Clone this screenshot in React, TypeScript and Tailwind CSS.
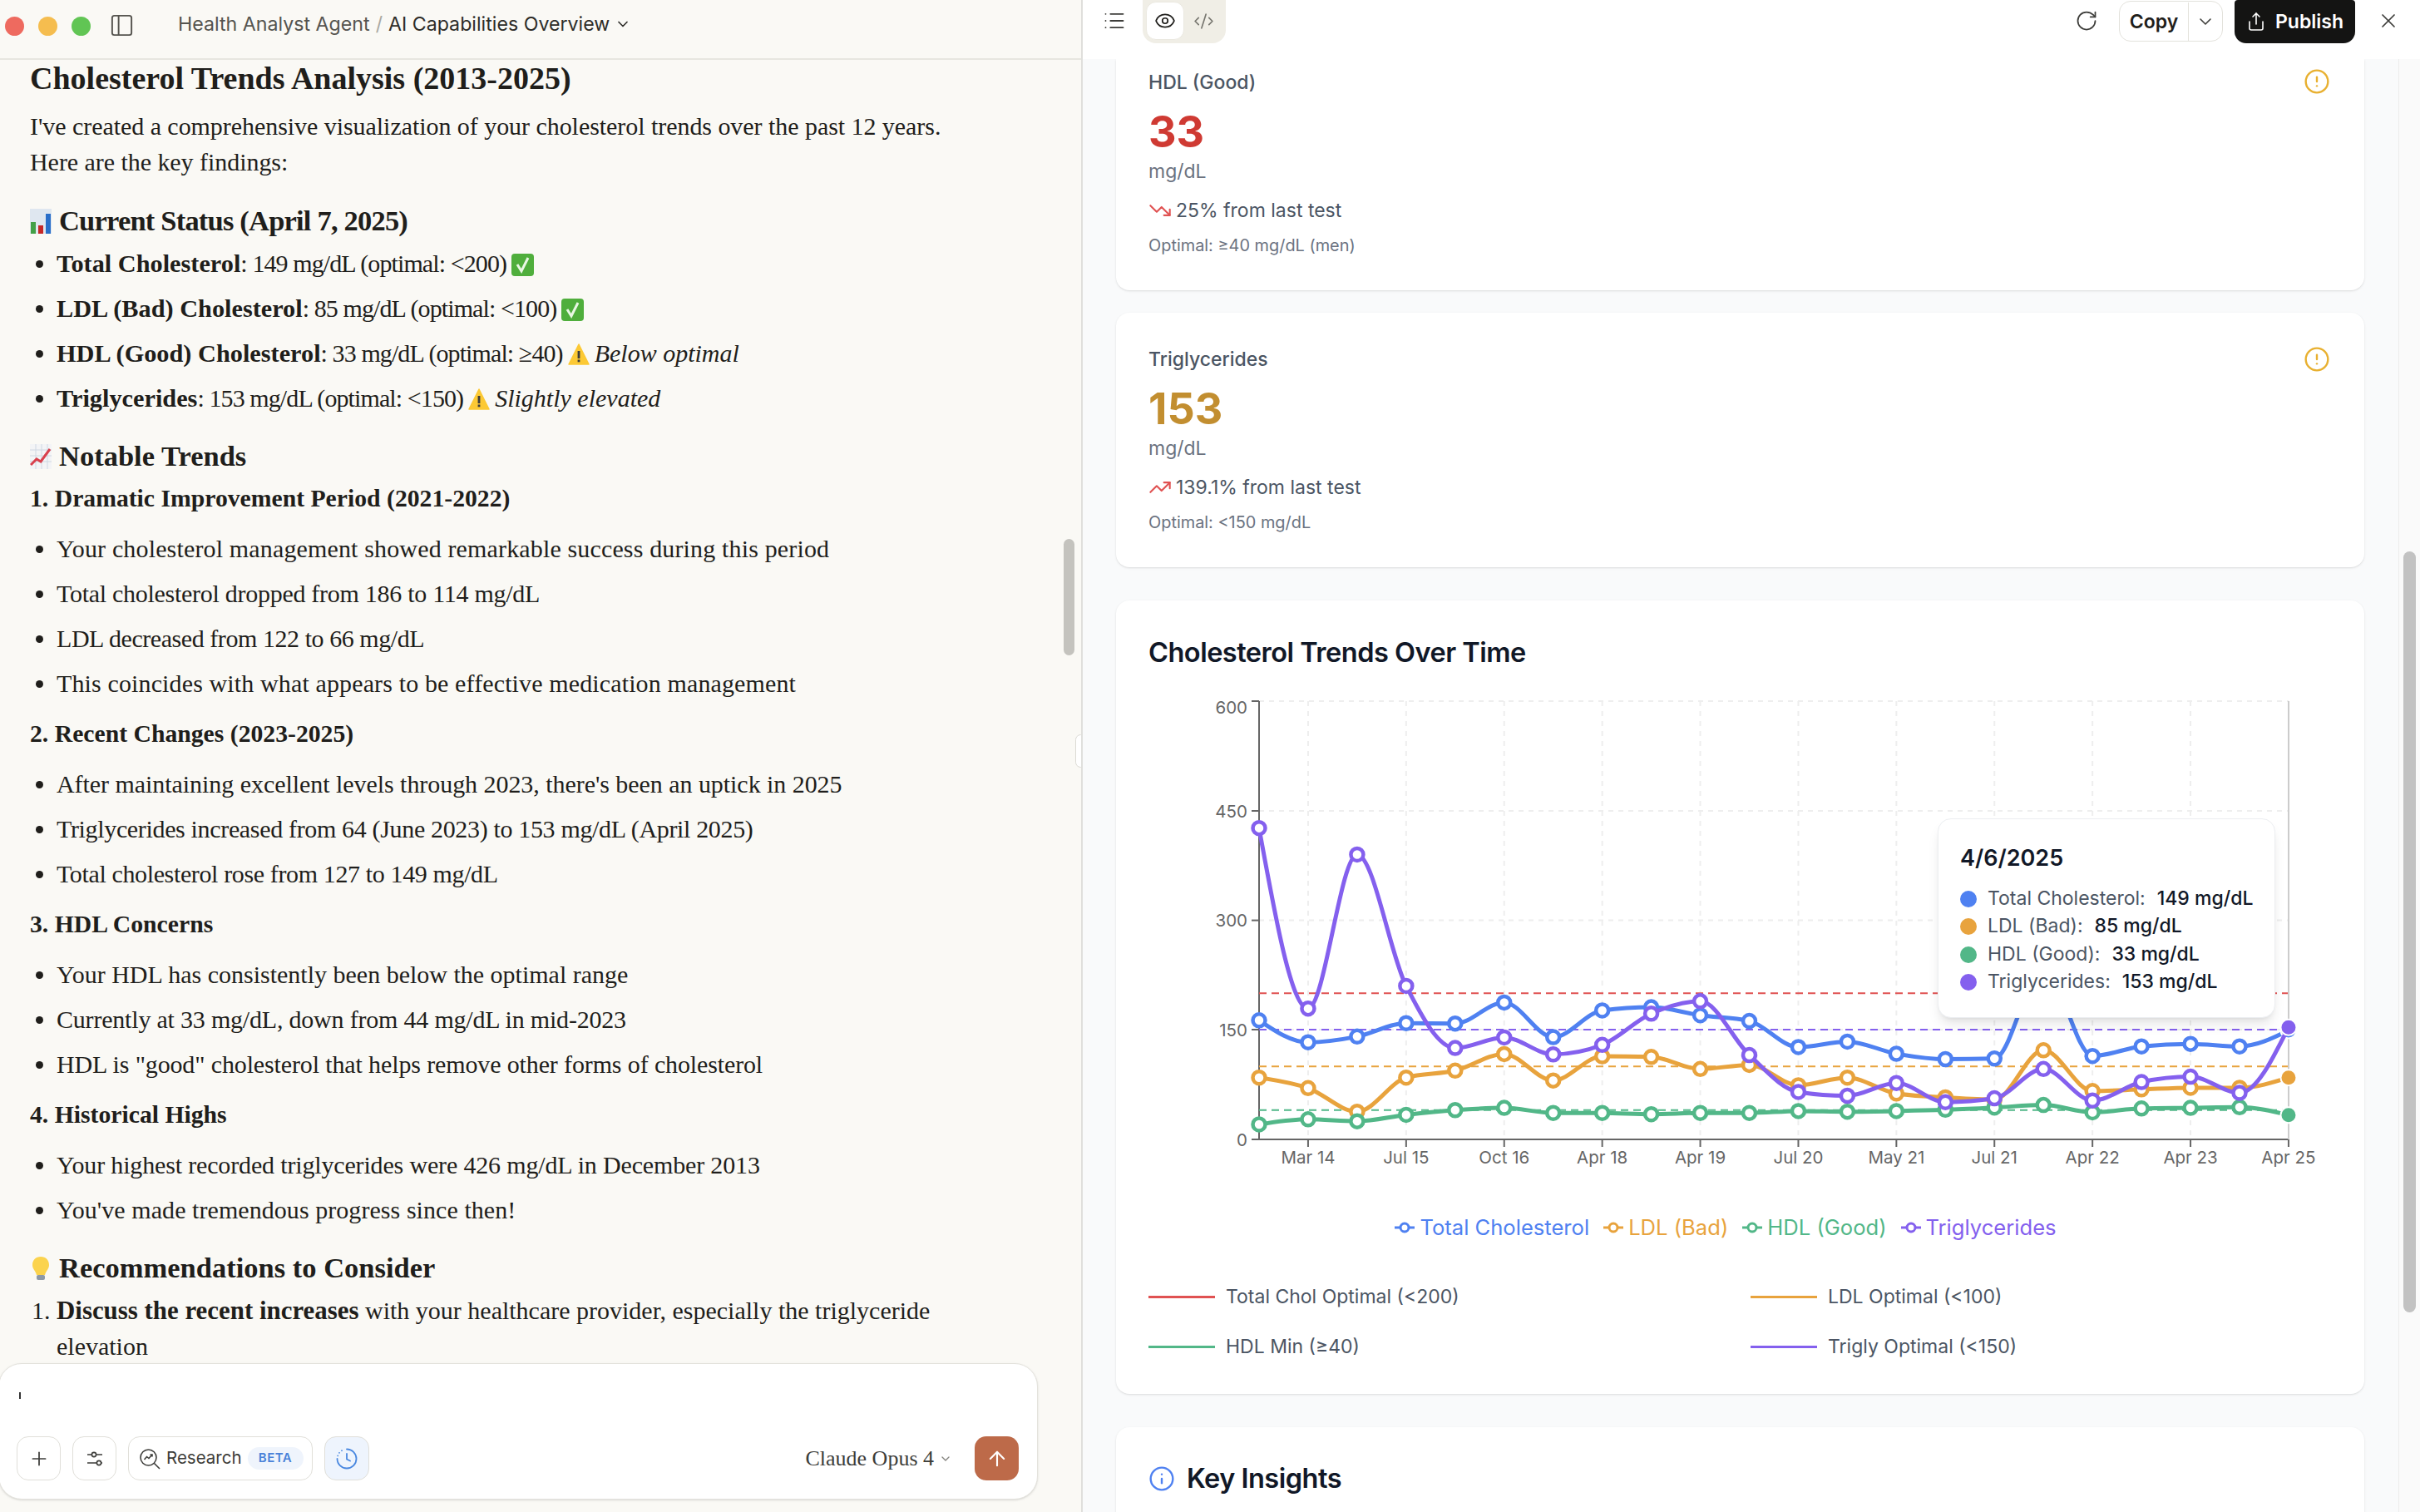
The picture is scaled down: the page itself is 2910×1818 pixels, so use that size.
import React from 'react';
import {
  List, Eye, CodeXml, RotateCw, ChevronDown, Share, X, Plus, ArrowUp,
  PanelLeft, TrendingDown, TrendingUp, Info, CircleAlert,
} from 'lucide-react';

const COLORS = { total: '#4f81f1', ldl: '#e8a33d', hdl: '#52b788', tri: '#8460ee' };

// y of each point, read off the plot (zoomed units, see sy)
const SERIES = [
  { key: 'total', color: COLORS.total, ys: [1063, 1132, 1114, 1072, 1073, 1007, 1116, 1032, 1022, 1047, 1065, 1147, 1130, 1168, 1185, 1183, 900, 1175, 1145, 1137, 1145, 1095] },
  { key: 'ldl', color: COLORS.ldl, ys: [1243, 1276, 1350, 1243, 1221, 1169, 1252, 1176, 1178, 1216, 1203, 1267, 1243, 1293, 1305, 1312, 1157, 1285, 1280, 1275, 1275, 1243] },
  { key: 'hdl', color: COLORS.hdl, ys: [1390, 1374, 1380, 1360, 1345, 1338, 1354, 1354, 1358, 1354, 1354, 1348, 1350, 1348, 1344, 1337, 1329, 1352, 1340, 1338, 1336, 1361] },
  { key: 'tri', color: COLORS.tri, ys: [459, 1026, 542, 955, 1150, 1117, 1170, 1140, 1042, 1003, 1172, 1288, 1300, 1260, 1320, 1308, 1216, 1315, 1257, 1240, 1291, 1085] },
];

const X_TICKS = ['Mar 14', 'Jul 15', 'Oct 16', 'Apr 18', 'Apr 19', 'Jul 20', 'May 21', 'Jul 21', 'Apr 22', 'Apr 23', 'Apr 25'];
const Y_TICKS = [
  { label: '600', y: 23, dy: 15 },
  { label: '450', y: 155, dy: 7.5 },
  { label: '300', y: 286.6, dy: 7.5 },
  { label: '150', y: 418, dy: 7.5 },
  { label: '0', y: 550, dy: 7.5 },
];

const sx = (i: number) => 114 + i * 58.95;
const sy = (z: number) => z / 2.613;

// same curve as d3's monotoneX
function monotonePath(pts: [number, number][]) {
  const n = pts.length;
  const d: number[] = [];
  for (let i = 0; i < n - 1; i++) d.push((pts[i + 1][1] - pts[i][1]) / (pts[i + 1][0] - pts[i][0]));
  const m: number[] = new Array(n).fill(0);
  for (let i = 1; i < n - 1; i++) {
    if (d[i - 1] * d[i] <= 0) m[i] = 0;
    else m[i] = (Math.sign(d[i - 1]) + Math.sign(d[i])) * Math.min(Math.abs(d[i - 1]), Math.abs(d[i]), 0.25 * Math.abs(d[i - 1] + d[i]));
  }
  m[0] = (3 * d[0] - m[1]) / 2;
  m[n - 1] = (3 * d[n - 2] - m[n - 2]) / 2;
  let p = `M${pts[0][0]},${pts[0][1]}`;
  for (let i = 0; i < n - 1; i++) {
    const h = (pts[i + 1][0] - pts[i][0]) / 3;
    p += `C${pts[i][0] + h},${pts[i][1] + m[i] * h} ${pts[i + 1][0] - h},${pts[i + 1][1] - m[i + 1] * h} ${pts[i + 1][0]},${pts[i + 1][1]}`;
  }
  return p;
}

const BarChartEmoji = () => (
  <svg width="26" height="30" viewBox="0 0 26 30" className="inline-block mr-[9px] align-[-4px]">
    <rect width="26" height="30" fill="#dfe7f0" />
    <rect x="1" y="16" width="6" height="14" fill="#43a047" />
    <rect x="10" y="20" width="6" height="10" fill="#c62828" />
    <rect x="19" y="6" width="6" height="24" fill="#2a6fc9" />
  </svg>
);

const TrendEmoji = () => (
  <svg width="26" height="30" viewBox="0 0 26 30" className="inline-block mr-[9px] align-[-4px]">
    <rect width="26" height="30" fill="#f3f4f6" />
    <path d="M0 7h26M0 14h26M0 21h26M7 0v30M14 0v30M21 0v30" stroke="#cfd8e3" strokeWidth="1" />
    <path d="M1 25l7-7 5 3 11-15" fill="none" stroke="#d9414e" strokeWidth="3" />
  </svg>
);

const BulbEmoji = () => (
  <svg width="26" height="30" viewBox="0 0 26 30" className="inline-block mr-[9px] align-[-4px]">
    <path d="M13 1c6 0 10 4 10 10 0 5-4 7-5 12H8C7 18 3 16 3 11 3 5 7 1 13 1z" fill="#fbd34d" />
    <rect x="8" y="23" width="10" height="6" rx="2" fill="#8d99a6" />
  </svg>
);

const Check = () => (
  <svg width="27" height="27" viewBox="0 0 27 27" className="inline-block ml-[6px] align-[-5px]">
    <rect width="27" height="27" rx="4" fill="#4fae3c" />
    <path d="M7 13l5 8 8-16" fill="none" stroke="#e9f7e4" strokeWidth="3" />
  </svg>
);

const Warn = () => (
  <svg width="26" height="26" viewBox="0 0 26 26" className="inline-block mx-[6px] align-[-4px]">
    <path d="M13 1l12 24H1z" fill="#fcc934" stroke="#fcc934" strokeWidth="1.5" strokeLinejoin="round" />
    <rect x="11.6" y="9" width="2.8" height="9" fill="#3b3b3b" />
    <rect x="11.6" y="19.5" width="2.8" height="2.8" fill="#3b3b3b" />
  </svg>
);

const SubHead: React.FC<{ className?: string; children: React.ReactNode }> = ({ className, children }) => (
  <h4 className={`font-bold text-[29.7px] leading-[43px] ${className ?? ''}`}>{children}</h4>
);

const Bullets: React.FC<{ className?: string; items: React.ReactNode[] }> = ({ className, items }) => (
  <ul className={`list-disc pl-[68px] ${className ?? ''}`}>
    {items.map((it, i) => (
      <li key={i} className="h-[54px] leading-[43px]">{it}</li>
    ))}
  </ul>
);

const Status: React.FC<{ name: string; rest: string; children?: React.ReactNode }> = ({ name, rest, children }) => (
  <>
    <b className="text-[30.3px]">{name}</b>
    <span className="tracking-[-0.9px]">{rest}</span>
    {children}
  </>
);

const Transcript = () => (
  <div className="flex-1 overflow-hidden pl-[36px] pr-[20px] font-['Liberation_Serif',serif] text-[30px] text-[#1f1e1b] whitespace-nowrap">
    <h2 className="font-bold text-[38px] leading-[46px] -mt-[1px]">Cholesterol Trends Analysis (2013-2025)</h2>
    <p className="leading-[43px] mt-[13px] tracking-[-0.05px]">
      I've created a comprehensive visualization of your cholesterol trends over the past 12 years.
      <br />
      Here are the key findings:
    </p>
    <h3 className="font-bold text-[34.5px] leading-[44px] mt-[27px] tracking-[-0.8px]"><BarChartEmoji />Current Status (April 7, 2025)</h3>
    <Bullets
      className="mt-[8px] -ml-[36px]"
      items={[
        <Status name="Total Cholesterol" rest=": 149 mg/dL (optimal: <200)"><Check /></Status>,
        <Status name="LDL (Bad) Cholesterol" rest=": 85 mg/dL (optimal: <100)"><Check /></Status>,
        <Status name="HDL (Good) Cholesterol" rest=": 33 mg/dL (optimal: ≥40)"><Warn /><i>Below optimal</i></Status>,
        <Status name="Triglycerides" rest=": 153 mg/dL (optimal: <150)"><Warn /><i>Slightly elevated</i></Status>,
      ]}
    />
    <h3 className="font-bold text-[34.5px] leading-[44px] mt-[15px]"><TrendEmoji />Notable Trends</h3>
    <SubHead className="mt-[8px]">1. Dramatic Improvement Period (2021-2022)</SubHead>
    <Bullets
      className="mt-[17px] -ml-[36px]"
      items={[
        <span className="tracking-[0.15px]">Your cholesterol management showed remarkable success during this period</span>,
        <span className="tracking-[-0.28px]">Total cholesterol dropped from 186 to 114 mg/dL</span>,
        <span className="tracking-[-0.44px]">LDL decreased from 122 to 66 mg/dL</span>,
        <span className="tracking-[0.13px]">This coincides with what appears to be effective medication management</span>,
      ]}
    />
    <SubHead className="mt-[7px]">2. Recent Changes (2023-2025)</SubHead>
    <Bullets
      className="mt-[17px] -ml-[36px]"
      items={[
        <span className="tracking-[-0.05px]">After maintaining excellent levels through 2023, there's been an uptick in 2025</span>,
        <span className="tracking-[-0.34px]">Triglycerides increased from 64 (June 2023) to 153 mg/dL (April 2025)</span>,
        <span className="tracking-[-0.37px]">Total cholesterol rose from 127 to 149 mg/dL</span>,
      ]}
    />
    <SubHead className="mt-[7px]">3. HDL Concerns</SubHead>
    <Bullets
      className="mt-[17px] -ml-[36px]"
      items={[
        'Your HDL has consistently been below the optimal range',
        <span className="tracking-[-0.2px]">Currently at 33 mg/dL, down from 44 mg/dL in mid-2023</span>,
        <span className="tracking-[-0.13px]">HDL is "good" cholesterol that helps remove other forms of cholesterol</span>,
      ]}
    />
    <SubHead className="mt-[7px]">4. Historical Highs</SubHead>
    <Bullets
      className="mt-[17px] -ml-[36px]"
      items={[
        <span className="tracking-[-0.16px]">Your highest recorded triglycerides were 426 mg/dL in December 2013</span>,
        <span className="tracking-[0.06px]">You've made tremendous progress since then!</span>,
      ]}
    />
    <h3 className="font-bold text-[34.5px] leading-[44px] mt-[15px]"><BulbEmoji />Recommendations to Consider</h3>
    <ol className="list-decimal pl-[32px] mt-[8px]">
      <li className="leading-[43px]">
        <b className="text-[30.9px]">Discuss the recent increases</b> with your healthcare provider, especially the triglyceride
        <br />
        elevation
      </li>
    </ol>
  </div>
);

const ToolButton: React.FC<{ className?: string; children: React.ReactNode }> = ({ className, children }) => (
  <button className={`h-[53px] rounded-[14px] border-[1.5px] border-[#e0dfd9] flex items-center justify-center text-[#3d3d3a] ${className ?? ''}`}>
    {children}
  </button>
);

const Composer = () => (
  <div className="shrink-0 relative -ml-[2px] mb-[15px] mt-[-1px] w-[1250px] h-[164px] bg-white rounded-[28px] border-[1.5px] border-[#e3e2dc] shadow-sm flex items-end justify-between pl-[21px] pr-[22px] pb-[22px]">
    <div className="absolute left-[24px] top-[34px] w-[1.5px] h-[8px] bg-[#333]" />
    <div className="flex items-center gap-[14px]">
      <ToolButton className="w-[53px]"><Plus size={26} strokeWidth={1.6} /></ToolButton>
      <ToolButton className="w-[53px]">
        <svg width="24" height="24" viewBox="0 0 24 24" fill="none" stroke="#3d3d3a" strokeWidth="1.6">
          <path d="M3 7h5M14 7h7M3 17h11M20 17h1" />
          <circle cx="11" cy="7" r="2.6" />
          <circle cx="17" cy="17" r="2.6" />
        </svg>
      </ToolButton>
      <ToolButton className="w-[222px] pl-[12px] justify-start gap-[7px]">
        <svg width="26" height="26" viewBox="0 0 26 26" fill="none" stroke="#3d3d3a" strokeWidth="1.6">
          <circle cx="11.5" cy="11.5" r="9.5" />
          <path d="M18.5 18.5l6.5 6.5M6.5 14l3-3.5 2.5 2 4-4.5M13.5 8h2.5v2.5" />
        </svg>
        <span className="text-[20.5px] text-[#3d3d3a]">Research</span>
        <span className="h-[27px] w-[67px] justify-center rounded-full bg-[#eff4fc] text-[#4a82d9] text-[15px] font-semibold flex items-center tracking-[0.5px]">BETA</span>
      </ToolButton>
      <ToolButton className="w-[54px] bg-[#eef4fd] border-[#cfe0f7]">
        <svg width="26" height="26" viewBox="0 0 26 26" fill="none" stroke="#4a88e0" strokeWidth="1.8" strokeLinecap="round">
          <path d="M13 1.5A11.5 11.5 0 1 1 1.5 13" />
          <path d="M2.2 9.3v0M4 5.8v0M7 3.2v0" />
          <path d="M13 7v6.5l4 2" />
        </svg>
      </ToolButton>
    </div>
    <div className="flex items-center">
      <span className="font-['Liberation_Serif',serif] text-[26px] text-[#3d3d3a]">Claude Opus 4</span>
      <ChevronDown size={16} className="ml-[6px] text-[#85847f]" />
      <button className="ml-[27px] w-[53px] h-[53px] rounded-[14px] bg-[#bd6a49] flex items-center justify-center text-white">
        <ArrowUp size={28} strokeWidth={1.8} />
      </button>
    </div>
  </div>
);

const ChatPane = () => (
  <div className="relative w-[1300px] shrink-0 h-full flex flex-col bg-[#faf9f5]">
    <div className="h-[72px] shrink-0 border-b-2 border-[#e7e6e0] flex items-start pt-[15px] pl-[6px]">
      <span className="w-[23px] h-[23px] rounded-full bg-[#ee6a5f] mt-[5px]" />
      <span className="w-[23px] h-[23px] rounded-full bg-[#f5bd4f] ml-[17px] mt-[5px]" />
      <span className="w-[23px] h-[23px] rounded-full bg-[#61c554] ml-[17px] mt-[5px]" />
      <PanelLeft size={31} strokeWidth={1.5} className="ml-[22px] text-[#55544f]" />
      <div className="ml-[52px] -mt-[3px] flex items-center text-[23.2px] text-[#55544f] whitespace-nowrap">
        Health Analyst Agent<span className="text-[#aaa9a2] mx-[7px]">/</span>
        <span className="text-[#2e2d29]">AI Capabilities Overview</span>
        <ChevronDown size={20} className="ml-[6px] text-[#2e2d29]" />
      </div>
    </div>
    <Transcript />
    <Composer />
    <div className="absolute left-[1279px] top-[648px] w-[13px] h-[140px] rounded-full bg-[#c4c3be]" />
    <div className="absolute left-[1293px] top-[883px] w-[13px] h-[40px] rounded-full bg-white border-[1.5px] border-[#dcdbd5]" />
  </div>
);

const TopBar = () => (
  <div className="h-[71px] shrink-0 bg-white flex items-start justify-between pl-[24px] pr-[24px]">
    <div className="flex items-start">
      <List size={28} strokeWidth={1.6} className="text-[#3d3d3a] mt-[11px]" />
      <div className="ml-[20px] w-[100px] h-[52px] bg-[#f0eee6] rounded-b-[16px] flex items-start pl-[4px] pt-[2px]">
        <span className="w-[46px] h-[46px] bg-white rounded-[12px] flex items-center justify-center border border-[#ebe9e1]">
          <Eye size={26} strokeWidth={1.6} className="text-[#1f1e1b]" />
        </span>
        <span className="w-[46px] h-[46px] flex items-center justify-center">
          <CodeXml size={25} strokeWidth={1.6} className="text-[#77766f]" />
        </span>
      </div>
    </div>
    <div className="flex items-start">
      <RotateCw size={28} strokeWidth={1.5} className="mt-[11px] text-[#3d3d3a]" />
      <div className="ml-[25px] mt-[1px] w-[125px] h-[49px] rounded-[14px] border-[1.5px] border-[#e3e2dc] flex items-center">
        <span className="w-[83px] text-center font-semibold text-[23px] text-[#1f1e1b] border-r-[1.5px] border-[#e3e2dc] leading-[46px]">Copy</span>
        <ChevronDown size={24} strokeWidth={1.6} className="ml-[8px] text-[#3d3d3a]" />
      </div>
      <button className="ml-[14px] w-[145px] h-[52px] rounded-b-[14px] rounded-t-[4px] bg-[#141413] text-white flex items-center justify-center gap-[11px] font-semibold text-[23px]">
        <Share size={24} strokeWidth={1.6} />Publish
      </button>
      <X size={28} strokeWidth={1.5} className="ml-[26px] mt-[11px] text-[#3d3d3a]" />
    </div>
  </div>
);

const Stat: React.FC<{
  name: string; value: string; valueClass: string; change: string; up: boolean; optimal: string; className: string; iconTop: string;
}> = ({ name, value, valueClass, change, up, optimal, className, iconTop }) => (
  <div className={`relative bg-white rounded-[16px] shadow-sm px-[39px] shrink-0 ${className}`}>
    <CircleAlert size={32} strokeWidth={1.8} className={`absolute right-[41px] text-[#e8b030] ${iconTop}`} />
    <div className="text-[23px] leading-[32px] font-medium text-[#4b5563]">{name}</div>
    <div className={`text-[52px] leading-[60px] font-bold mt-[14px] ${valueClass}`}>{value}</div>
    <div className="text-[23px] leading-[32px] text-[#6b7280] mt-[1px]">mg/dL</div>
    <div className="flex items-center gap-[5px] text-[23px] leading-[32px] text-[#4b5563] mt-[15px]">
      {up
        ? <TrendingUp size={28} strokeWidth={1.8} className="text-[#e05252]" />
        : <TrendingDown size={28} strokeWidth={1.8} className="text-[#e05252]" />}
      {change}
    </div>
    <div className="text-[19.9px] leading-[28px] text-[#6b7280] mt-[12px]">{optimal}</div>
  </div>
);

const Chart = () => (
  <div className="relative w-[1400px] h-[600px] ml-[19px] shrink-0">
    <svg width="1400" height="600" viewBox="0 0 1400 600" className="block font-['Inter',sans-serif]">
      {/* grid */}
      {Y_TICKS.slice(0, 4).map((t) => (
        <line key={t.label} x1={114} x2={1352} y1={t.y} y2={t.y} stroke="#eeeeee" strokeWidth="2" strokeDasharray="6 6" />
      ))}
      {X_TICKS.map((t, i) => (
        <line key={t} x1={sx(i * 2 + 1)} x2={sx(i * 2 + 1)} y1={23} y2={550} stroke="#eeeeee" strokeWidth="2" strokeDasharray="6 6" />
      ))}
      {/* axes */}
      <path d="M114 23V550H1352" fill="none" stroke="#666666" strokeWidth="2" />
      {Y_TICKS.map((t) => (
        <g key={t.label}>
          <line x1={105} x2={114} y1={t.y} y2={t.y} stroke="#666666" strokeWidth="2" />
          <text x={100} y={t.y + t.dy} textAnchor="end" fontSize="20.5" fill="#666666">{t.label}</text>
        </g>
      ))}
      {X_TICKS.map((t, i) => (
        <g key={t}>
          <line x1={sx(i * 2 + 1)} x2={sx(i * 2 + 1)} y1={550} y2={559} stroke="#666666" strokeWidth="2" />
          <text x={sx(i * 2 + 1)} y={579} textAnchor="middle" fontSize="20.5" fill="#666666">{t}</text>
        </g>
      ))}
      {/* optimal lines */}
      {[
        { z: 978, c: '#e05252' },
        { z: 1208, c: COLORS.ldl },
        { z: 1345, c: COLORS.hdl },
        { z: 1092, c: COLORS.tri },
      ].map((r) => (
        <line key={r.z} x1={114} x2={1352} y1={sy(r.z)} y2={sy(r.z)} stroke={r.c} strokeWidth="2" strokeDasharray="9 6" />
      ))}
      <line x1={1352} x2={1352} y1={23} y2={550} stroke="#cccccc" strokeWidth="2" />
      {/* series */}
      {SERIES.map((s) => {
        const pts = s.ys.map((z, i) => [sx(i), sy(z)] as [number, number]);
        return (
          <g key={s.key}>
            <path d={monotonePath(pts)} fill="none" stroke={s.color} strokeWidth="5" />
            {pts.slice(0, -1).map((p, i) => (
              <circle key={i} cx={p[0]} cy={p[1]} r="7.5" fill="#ffffff" stroke={s.color} strokeWidth="4.5" />
            ))}
            <circle cx={pts[21][0]} cy={pts[21][1]} r="9.5" fill={s.color} stroke="#ffffff" strokeWidth="2" />
          </g>
        );
      })}
    </svg>
    {/* tooltip */}
    <div className="absolute left-[930px] top-[164px] w-[406px] h-[240px] bg-white rounded-[16px] border-[1.5px] border-[#eceef1] shadow-lg pl-[26px] pt-[30px]">
      <div className="text-[27px] leading-[34px] font-semibold text-[#111827]">4/6/2025</div>
      <div className="mt-[15px] text-[23px] leading-[33.4px]">
        {[
          ['Total Cholesterol:', '149 mg/dL', 'bg-[#4f81f1]'],
          ['LDL (Bad):', '85 mg/dL', 'bg-[#e8a33d]'],
          ['HDL (Good):', '33 mg/dL', 'bg-[#52b788]'],
          ['Triglycerides:', '153 mg/dL', 'bg-[#8460ee]'],
        ].map(([label, val, dot]) => (
          <div key={label} className="flex items-center whitespace-nowrap">
            <span className={`w-[20px] h-[20px] rounded-full ${dot}`} />
            <span className="ml-[13px] text-[#4b5563]">{label}</span>
            <span className="ml-[14px] font-medium text-[#111827]">{val}</span>
          </div>
        ))}
      </div>
    </div>
  </div>
);

const LegendItem: React.FC<{ color: string; label: string; textClass: string }> = ({ color, label, textClass }) => (
  <span className={`flex items-center gap-[6px] ${textClass}`}>
    <svg width="24" height="14" viewBox="0 0 24 14">
      <path d="M0 7h24" stroke={color} strokeWidth="3" />
      <circle cx="12" cy="7" r="5" fill="#ffffff" stroke={color} strokeWidth="3" />
    </svg>
    {label}
  </span>
);

const RefKey: React.FC<{ swatch: string; label: string }> = ({ swatch, label }) => (
  <div className="flex items-center gap-[13px] text-[23px] leading-[32px] text-[#4b5563]">
    <span className={`w-[80px] h-[3px] ${swatch}`} />
    {label}
  </div>
);

const ArtifactPane = () => (
  <div className="relative flex-1 min-w-0 h-full flex flex-col bg-[#f9fafb] border-l-2 border-[#dfdfdc] font-['Inter',sans-serif]">
    <TopBar />
    <div className="flex-1 overflow-hidden pl-[40px] pr-[67px] flex flex-col">
      <Stat name="HDL (Good)" value="33" valueClass="text-[#cf3a33]" change="25% from last test" up={false} optimal="Optimal: ≥40 mg/dL (men)" className="rounded-t-none h-[278px] pt-[12px]" iconTop="top-[11px]" />
      <Stat name="Triglycerides" value="153" valueClass="text-[#c28e30]" change="139.1% from last test" up optimal="Optimal: <150 mg/dL" className="h-[306px] pt-[40px] mt-[27px]" iconTop="top-[40px]" />
      <div className="bg-white rounded-[16px] shadow-sm px-[39px] mt-[40px] h-[954px] shrink-0 pt-[42px]">
        <h3 className="text-[32.5px] tracking-[-0.5px] leading-[42px] font-semibold text-[#111827]">Cholesterol Trends Over Time</h3>
        <div className="mt-[14px]"><Chart /></div>
        <div className="mt-[38px] flex justify-center gap-[17px] text-[25.6px] leading-[36px] -ml-[35px]">
          <LegendItem color={COLORS.total} label="Total Cholesterol" textClass="text-[#4f81f1]" />
          <LegendItem color={COLORS.ldl} label="LDL (Bad)" textClass="text-[#e8a33d]" />
          <LegendItem color={COLORS.hdl} label="HDL (Good)" textClass="text-[#52b788]" />
          <LegendItem color={COLORS.tri} label="Triglycerides" textClass="text-[#8460ee]" />
        </div>
        <div className="mt-[49px] grid grid-cols-[724px_1fr] gap-y-[28px]">
          <RefKey swatch="bg-[#e05252]" label="Total Chol Optimal (<200)" />
          <RefKey swatch="bg-[#e8a33d]" label="LDL Optimal (<100)" />
          <RefKey swatch="bg-[#52b788]" label="HDL Min (≥40)" />
          <RefKey swatch="bg-[#8460ee]" label="Trigly Optimal (<150)" />
        </div>
      </div>
      <div className="bg-white rounded-[16px] shadow-sm px-[39px] mt-[40px] h-[200px] shrink-0 pt-[41px]">
        <h3 className="flex items-center gap-[14px] text-[32.5px] tracking-[-0.5px] leading-[42px] font-semibold text-[#111827]">
          <Info size={32} strokeWidth={1.8} className="text-[#4f81f1]" />Key Insights
        </h3>
      </div>
    </div>
    <div className="absolute right-0 top-[71px] bottom-0 w-[26px] bg-[#fafafa] border-l border-[#ececec]">
      <div className="absolute left-[5px] top-[592px] w-[15px] h-[915px] rounded-full bg-[#c2c2c2]" />
    </div>
  </div>
);

export default function App() {
  return (
    <div className="w-[2910px] h-[1818px] flex overflow-hidden bg-[#faf9f5] font-['Inter',sans-serif]">
      <ChatPane />
      <ArtifactPane />
    </div>
  );
}
